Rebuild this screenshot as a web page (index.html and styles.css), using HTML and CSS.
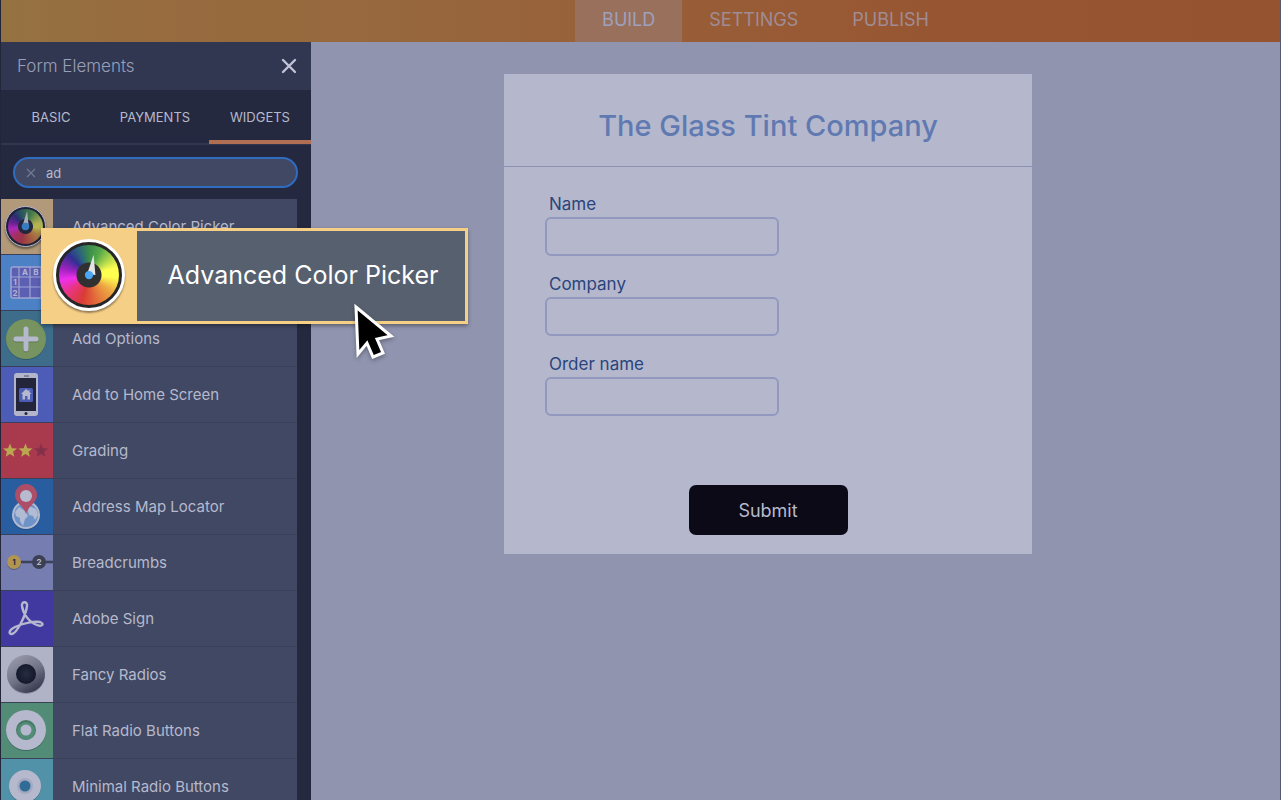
FILE: index.html
```html
<!DOCTYPE html>
<html lang="en">
<head>
  <meta charset="UTF-8">
  <meta name="viewport" content="width=device-width, initial-scale=1.0">
  <title>Form Builder</title>
  <link rel="stylesheet" href="styles.css">
</head>
<body>
  <header class="topbar">
    <nav class="nav">
      <a href="#build" class="active">BUILD</a>
      <a href="#settings">SETTINGS</a>
      <a href="#publish">PUBLISH</a>
    </nav>
  </header>
  <div class="content">
    <aside class="sidebar">
      <div class="sidebar-head">
        <h2>Form Elements</h2>
        <button type="button" class="close" aria-label="Close">
          <svg width="16" height="16" viewBox="0 0 16 16"><path d="M2 2L14 14M14 2L2 14" stroke="#c0c3d6" stroke-width="2.4" stroke-linecap="round"/></svg>
        </button>
      </div>
      <div class="tabs">
        <button type="button">BASIC</button>
        <button type="button">PAYMENTS</button>
        <button type="button" class="active">WIDGETS</button>
      </div>
      <div class="search">
        <div class="search-box">
          <button type="button" aria-label="Clear search">
            <svg width="10" height="10" viewBox="0 0 10 10"><path d="M1 1L9 9M9 1L1 9" stroke="#727994" stroke-width="1.2"/></svg>
          </button>
          <input type="text" value="ad" aria-label="Search widgets">
        </div>
      </div>
      <ul class="widgets">
        <li>
          <div class="icon tan"><div class="wheel wheel-small"><i></i><svg viewBox="0 0 72 72"><path d="M30 36L39 7L42 37Z" fill="#a9abba"/><circle cx="36" cy="36" r="7" fill="#377cc0"/></svg></div></div>
          <span>Advanced Color Picker</span>
        </li>
        <li>
          <div class="icon sky">
            <svg viewBox="0 0 52 55">
              <rect x="10" y="12" width="42" height="31" rx="2" fill="#5d60b2" stroke="#9da5d2" stroke-width="1.5"/>
              <path d="M10 22H52M10 32H52M18 12V43M29 12V43M40 12V43" stroke="#9da5d2" stroke-width="1.2"/>
              <g fill="#b0b5d6" font-size="8" font-weight="700" text-anchor="middle"><text x="24" y="20">A</text><text x="35" y="20">B</text><text x="14" y="30">1</text><text x="14" y="41">2</text></g>
            </svg>
          </div>
        </li>
        <li>
          <div class="icon teal">
            <svg viewBox="0 0 52 55">
              <circle cx="25" cy="29" r="20" fill="#2f5b70"/>
              <circle cx="25" cy="28" r="20" fill="#779460"/>
              <path d="M25 19V39M15 29H35" stroke="#5f7850" stroke-width="5" stroke-linecap="round"/>
              <path d="M25 18V38M15 28H35" stroke="#b6b9cd" stroke-width="5" stroke-linecap="round"/>
            </svg>
          </div>
          <span>Add Options</span>
        </li>
        <li>
          <div class="icon blue">
            <svg viewBox="0 0 52 55">
              <rect x="13" y="6" width="24" height="43" rx="3" fill="#b3b6cb"/>
              <rect x="15" y="11" width="20" height="33" fill="#23263b"/>
              <path d="M23 9H28" stroke="#4e526b"/>
              <circle cx="25" cy="46.500" r="1.500" fill="#23263b"/>
              <rect x="18" y="21" width="14" height="14" rx="1.500" fill="#4c5cb5"/>
              <path d="M25 22L20 27H21.500V32.500H24V29H26.500V32.500H29V27H30.500L28.500 25V23H27.500V24.200Z" fill="#b6b9cd"/>
            </svg>
          </div>
          <span>Add to Home Screen</span>
        </li>
        <li>
          <div class="icon red">
            <svg viewBox="0 0 52 55">
              <path id="star" d="M9 20.500L10.900 25.200L16 25.500L12.100 28.800L13.300 33.800L9 31.100L4.700 33.800L5.900 28.800L2 25.500L7.100 25.200Z" fill="#baa750"/>
              <use href="#star" x="15.500"/>
              <path d="M40 20.500L41.900 25.200L47 25.500L43.100 28.800L44.300 33.800L40 31.100L35.700 33.800L36.900 28.800L33 25.500L38.100 25.200Z" fill="#84304b"/>
            </svg>
          </div>
          <span>Grading</span>
        </li>
        <li>
          <div class="icon azure">
            <svg viewBox="0 0 52 55">
              <circle cx="25" cy="37" r="14" fill="#204f88"/>
              <circle cx="25" cy="36" r="14" fill="#b3bad0"/>
              <circle cx="25" cy="36" r="12" fill="#6e93c9"/>
              <path d="M14 33L18 28L24 32L27 37L24 40L22 47L19 42L19 39L15 37ZM28 27L35 30L37 36L34 41L32 37L28 36L27 32Z" fill="#b1bbd3"/>
              <path d="M25 35C23 27 14 24 14 16A11 11 0 0 1 36 16C36 24 27 27 25 35Z" fill="#ae4d67"/>
              <circle cx="25" cy="17" r="6" fill="#b7bbcf"/>
            </svg>
          </div>
          <span>Address Map Locator</span>
        </li>
        <li>
          <div class="icon lilac">
            <svg viewBox="0 0 52 55">
              <path d="M13 27H52" stroke="#3d425b" stroke-width="2.500"/>
              <circle cx="13" cy="28" r="7" fill="#565d81"/>
              <circle cx="13" cy="27" r="7" fill="#b09551"/>
              <circle cx="38" cy="27" r="7" fill="#3c4055"/>
              <g font-size="8" font-weight="700" text-anchor="middle"><text x="13" y="30" fill="#23273d">1</text><text x="38" y="30" fill="#b6b9cd">2</text></g>
            </svg>
          </div>
          <span>Breadcrumbs</span>
        </li>
        <li>
          <div class="icon indigo">
            <svg viewBox="0 0 52 55">
              <path d="M21 15C20 10 27 10 26 15C25 24 16 42 11 43C7 43 8 39 14 36C22 32 34 30 39 31C44 33 41 36 36 34C28 31 22 23 21 15Z" fill="none" stroke="#b6b7cf" stroke-width="2.400"/>
            </svg>
          </div>
          <span>Adobe Sign</span>
        </li>
        <li>
          <div class="icon silver">
            <svg viewBox="0 0 52 55">
              <defs><linearGradient id="ring" x1="0.200" y1="0" x2="0.800" y2="1"><stop stop-color="#9a9cae"/><stop offset="0.500" stop-color="#717386"/><stop offset="1" stop-color="#303248"/></linearGradient><radialGradient id="hole"><stop stop-color="#272c40"/><stop offset="1" stop-color="#14182b"/></radialGradient></defs>
              <circle cx="25" cy="28" r="19" fill="#8c8ea2"/>
              <circle cx="25" cy="27" r="19" fill="url(#ring)"/>
              <circle cx="25" cy="27" r="10" fill="url(#hole)"/>
            </svg>
          </div>
          <span>Fancy Radios</span>
        </li>
        <li>
          <div class="icon green">
            <svg viewBox="0 0 52 55">
              <circle cx="25" cy="28" r="20" fill="#3c6c61"/>
              <circle cx="25" cy="27" r="20" fill="#b6b9cd"/>
              <circle cx="25" cy="27" r="10" fill="#437765"/>
              <circle cx="25" cy="28" r="9" fill="#528c77"/>
              <circle cx="25" cy="27" r="5.500" fill="#b6b9cd"/>
            </svg>
          </div>
          <span>Flat Radio Buttons</span>
        </li>
        <li>
          <div class="icon cyan">
            <svg viewBox="0 0 52 55">
              <circle cx="24" cy="28" r="16" fill="#3e7587"/>
              <circle cx="24" cy="27" r="16" fill="#b6b9cd"/>
              <circle cx="24" cy="27" r="8" fill="#a2a9c1"/>
              <circle cx="24" cy="27" r="5.500" fill="#306c96"/>
            </svg>
          </div>
          <span>Minimal Radio Buttons</span>
        </li>
      </ul>
    </aside>
    <main class="stage">
      <form class="card">
        <h1>The Glass Tint Company</h1>
        <div class="fields">
          <label for="name">Name</label>
          <input type="text" id="name">
          <label for="company">Company</label>
          <input type="text" id="company">
          <label for="order">Order name</label>
          <input type="text" id="order">
        </div>
        <button type="button" class="submit">Submit</button>
      </form>
    </main>
  </div>

  <!-- widget being dragged -->
  <div class="dragged">
    <div class="dragged-icon"><div class="wheel"><i></i><svg viewBox="0 0 72 72"><path d="M34 35L41 14L43 36Z" fill="#e3e3e3"/><circle cx="36" cy="36" r="4.500" fill="#4ba6f5"/></svg></div></div>
    <span>Advanced Color Picker</span>
  </div>
  <svg class="cursor" width="44" height="60" viewBox="0 0 44 60">
    <path d="M3 4L38 33L24 36L30 50L20 54L14 40L5 51Z" fill="#000" stroke="#fff" stroke-width="3"/>
  </svg>
</body>
</html>
```
FILE: styles.css
```css
* {
  margin: 0;
  padding: 0;
  box-sizing: border-box;
}
body {
  height: 100vh;
  display: flex;
  flex-direction: column;
  position: relative;
  overflow: hidden;
  border-left: 1px solid #23263a;
  border-right: 1px solid #555a72;
  background-color: #9094ae;
  font-family: Inter, "Liberation Sans", sans-serif;
  color: #b6b9cd;
}
button,
input {
  font: inherit;
  color: inherit;
  border: none;
  background: none;
}
.topbar {
  flex: none;
  height: 42px;
  display: flex;
  justify-content: center;
  padding-left: 250px;
  background: linear-gradient(90deg, #957241, #976c3f 10%, #97683d 30%, #985f38 50%, #975531 75%, #96532f);
}
.nav {
  display: flex;
}
.nav a {
  padding: 0 27px;
  font-size: 18px;
  line-height: 40px;
  color: #a08c94;
  text-decoration: none;
}
.nav .active {
  background-color: #98705c;
  color: #9ea1bd;
}
.content {
  flex: 1;
  min-height: 0;
  display: flex;
}
.sidebar {
  width: 310px;
  flex: none;
  display: flex;
  flex-direction: column;
  background-color: #25293f;
}
.sidebar-head {
  flex: none;
  height: 48px;
  display: flex;
  justify-content: space-between;
  align-items: center;
  padding: 0 14px 0 16px;
  background-color: #313750;
}
.sidebar-head h2 {
  font-size: 17px;
  font-weight: 300;
  color: #9a9fb8;
}
.close {
  height: 16px;
}
.close svg,
.search-box svg {
  display: block;
}
.tabs {
  flex: none;
  height: 55px;
  display: grid;
  grid-template-columns: 100px 1fr 102px;
  border-bottom: 2px solid #313750;
}
.tabs button {
  padding-top: 4px;
  margin-bottom: -1px;
  font-size: 13px;
  border-bottom: 4px solid transparent;
}
.tabs .active {
  border-color: #b06e52;
}
.search {
  flex: none;
  height: 54px;
  padding: 12px 13px 11px 12px;
}
.search-box {
  height: 31px;
  display: flex;
  align-items: center;
  gap: 10px;
  padding: 0 11px;
  border: 2px solid #306cc0;
  border-radius: 16px;
  background-color: #404863;
}
.search-box input {
  flex: 1;
  min-width: 0;
  font-size: 13px;
  outline: none;
}
.widgets {
  flex: 1;
  min-height: 0;
  overflow: hidden;
  margin-right: 14px;
  list-style: none;
}
.widgets li {
  height: 56px;
  display: flex;
  align-items: center;
  gap: 19px;
  border-bottom: 1px solid #394059;
  background-color: #404863;
  font-size: 15px;
}
.icon {
  width: 52px;
  height: 55px;
  display: flex;
  align-items: center;
  justify-content: center;
}
.icon > svg {
  width: 52px;
  height: 55px;
}
.tan {
  justify-content: flex-start;
  padding-left: 4px;
  background-color: #b1997a;
}
.sky {
  background-color: #4c82c5;
}
.teal {
  background-color: #3d6d8b;
}
.blue {
  background-color: #4d5cb7;
}
.red {
  background-color: #a93a4d;
}
.azure {
  background-color: #285d9f;
}
.lilac {
  background-color: #767db0;
}
.indigo {
  background-color: #4139a0;
}
.silver {
  background-color: #b0b2c6;
}
.green {
  background-color: #528c77;
}
.cyan {
  background-color: #5292a8;
}
.wheel {
  width: 72px;
  height: 72px;
  display: grid;
  border: 3px solid #fff;
  border-radius: 50%;
  background-color: #262626;
  box-shadow: 0 2px 2px rgba(0, 0, 0, 0.4);
}
.wheel i,
.wheel svg {
  grid-area: 1 / 1;
}
.wheel i {
  margin: 3px;
  border-radius: 50%;
  background: radial-gradient(circle, #303030 0 12px, transparent 13px), conic-gradient(#3a8c4c, #56a948 25deg, #ffff50 75deg, #ffff50 95deg, #eeaa44 125deg, #e57b3c 155deg, #da3b35 195deg, #e83580 230deg, #ee30ee 260deg, #9a22bd 285deg, #303090 315deg, #2b6080 335deg, #3a8c4c);
}
.wheel-small {
  width: 41px;
  height: 41px;
  border: 1px solid #b6b9cd;
  background-color: #1e2238;
}
.wheel-small i {
  margin: 2px;
  background: radial-gradient(circle, #23273c 0 7px, transparent 8px), conic-gradient(#326650, #447b49 25deg, #afb052 75deg, #b6b650 95deg, #a77c45 125deg, #a45c41 155deg, #993545 195deg, #a43065 230deg, #aa2aba 260deg, #6b2292 285deg, #2a2d70 315deg, #284b65 335deg, #326650);
}
.stage {
  flex: 1;
  padding: 32px 55px 0 0;
}
.card {
  width: 528px;
  height: 480px;
  margin: 0 auto;
  display: flex;
  flex-direction: column;
  background-color: #b5b8cd;
}
.card h1 {
  height: 93px;
  padding-top: 12px;
  border-bottom: 1px solid #8c90b1;
  font-size: 29px;
  font-weight: 500;
  line-height: 80px;
  text-align: center;
  color: #607ab1;
}
.fields {
  flex: 1;
  display: flex;
  flex-direction: column;
  padding: 24px 41px 0;
}
.fields label {
  padding-left: 4px;
  font-size: 17px;
  line-height: 26px;
  color: #2b447b;
}
.fields input {
  width: 234px;
  height: 39px;
  margin-bottom: 15px;
  padding: 0 10px;
  border: 2px solid #9399be;
  border-radius: 6px;
}
.submit {
  width: 159px;
  height: 50px;
  margin: 0 auto 19px;
  border-radius: 7px;
  background-color: #0c0a17;
  font-size: 18px;
}
.dragged {
  position: absolute;
  left: 40px;
  top: 228px;
  width: 427px;
  height: 96px;
  display: flex;
  align-items: center;
  border: 3px solid #f5cf86;
  background-color: #57606e;
  box-shadow: 0 2px 4px rgba(0, 0, 0, 0.35);
  color: #fff;
  font-size: 25px;
}
.dragged-icon {
  width: 93px;
  height: 90px;
  display: flex;
  align-items: center;
  padding-left: 9px;
  padding-bottom: 2px;
  background-color: #f5cf86;
}
.dragged span {
  flex: 1;
  padding: 0 0 2px 4px;
  text-align: center;
}
.cursor {
  position: absolute;
  left: 352px;
  top: 303px;
  filter: drop-shadow(0 2px 2px rgba(0, 0, 0, 0.3));
}
```
